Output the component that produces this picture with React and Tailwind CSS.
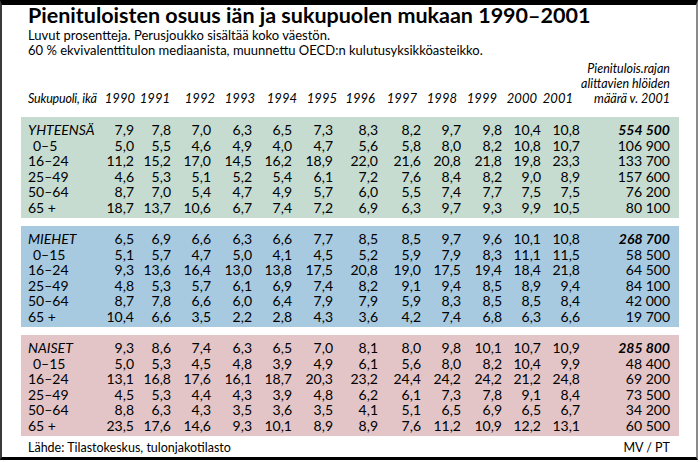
const YEARS = ["1990", "1991", "1992", "1993", "1994", "1995", "1996", "1997", "1998", "1999", "2000", "2001"];

const GROUPS = [
	{
		bg: "bg-[#c6dcd0]",
		rows: [
			["YHTEENSÄ", "7,9 7,8 7,0 6,3 6,5 7,3 8,3 8,2 9,7 9,8 10,4 10,8", "554 500"],
			["0–5", "5,0 5,5 4,6 4,9 4,0 4,7 5,6 5,8 8,0 8,2 10,8 10,7", "106 900"],
			["16–24", "11,2 15,2 17,0 14,5 16,2 18,9 22,0 21,6 20,8 21,8 19,8 23,3", "133 700"],
			["25–49", "4,6 5,3 5,1 5,2 5,4 6,1 7,2 7,6 8,4 8,2 9,0 8,9", "157 600"],
			["50–64", "8,7 7,0 5,4 4,7 4,9 5,7 6,0 5,5 7,4 7,7 7,5 7,5", "76 200"],
			["65 +", "18,7 13,7 10,6 6,7 7,4 7,2 6,9 6,3 9,7 9,3 9,9 10,5", "80 100"],
		],
	},
	{
		bg: "bg-[#a8cae0]",
		rows: [
			["MIEHET", "6,5 6,9 6,6 6,3 6,6 7,7 8,5 8,5 9,7 9,6 10,1 10,8", "268 700"],
			["0–15", "5,1 5,7 4,7 5,0 4,1 4,5 5,2 5,9 7,9 8,3 11,1 11,5", "58 500"],
			["16–24", "9,3 13,6 16,4 13,0 13,8 17,5 20,8 19,0 17,5 19,4 18,4 21,8", "64 500"],
			["25–49", "4,8 5,3 5,7 6,1 6,9 7,4 8,2 9,1 9,4 8,5 8,9 9,4", "84 100"],
			["50–64", "8,7 7,8 6,6 6,0 6,4 7,9 7,9 5,9 8,3 8,5 8,5 8,4", "42 000"],
			["65 +", "10,4 6,6 3,5 2,2 2,8 4,3 3,6 4,2 7,4 6,8 6,3 6,6", "19 700"],
		],
	},
	{
		bg: "bg-[#e3c5c7]",
		rows: [
			["NAISET", "9,3 8,6 7,4 6,3 6,5 7,0 8,1 8,0 9,8 10,1 10,7 10,9", "285 800"],
			["0–15", "5,0 5,3 4,5 4,8 3,9 4,9 6,1 5,6 8,0 8,2 10,4 9,9", "48 400"],
			["16–24", "13,1 16,8 17,6 16,1 18,7 20,3 23,2 24,4 24,2 24,2 21,2 24,8", "69 200"],
			["25–49", "4,5 5,3 4,4 4,3 3,9 4,8 6,2 6,1 7,3 7,8 9,1 8,4", "73 500"],
			["50–64", "8,8 6,3 4,3 3,5 3,6 3,5 4,1 5,1 6,5 6,9 6,5 6,7", "34 200"],
			["65 +", "23,5 17,6 14,6 9,3 10,1 8,9 8,9 7,6 11,2 10,9 12,2 13,1", "60 500"],
		],
	},
];

const ROW_GRID =
	"grid grid-cols-[72px_34px_37px_40px_41px_40px_41px_45px_43px_40px_41px_39px_39px_90px]";

const DataRow = ({ label, values, total, first }) => (
	<div className={`${ROW_GRID} h-[15.5px] leading-[15.5px] text-[14px]`}>
		<div className={`${first ? "italic" : ""} ${label.startsWith("0") ? "pl-[5px]" : ""}`}>{label}</div>
		{values.split(" ").map((v, i) => (
			<div key={i} className="text-right">
				{v}
			</div>
		))}
		<div className={`text-right ${first ? "font-bold italic" : ""}`}>{total}</div>
	</div>
);

const Panel = ({ bg, rows }) => (
	<div className={`${bg} pl-[7px] pr-[9px] pt-[5px] pb-[3px]`}>
		{rows.map(([label, values, total], i) => (
			<DataRow key={label + i} label={label} values={values} total={total} first={i === 0} />
		))}
	</div>
);

export default function App() {
	return (
		<div className="w-[700px] h-[462px] bg-white text-black font-['Lato',sans-serif]">
			<div className="w-[698px] h-[460px] border-t-[5px] border-t-black border-l-2 border-l-[#3a3a3a] border-r-2 border-r-[#8a8a8a] border-b-[3px] border-b-black flex flex-col pl-[19px] pr-[17px]">
				<div className="px-[7px]">
					<h1 className="text-[21.5px] leading-[20px] font-bold whitespace-nowrap">Pienituloisten osuus iän ja sukupuolen mukaan 1990–2001</h1>
					<div className="mt-[3px] text-[13px] leading-[15px]">
						<p>Luvut prosentteja. Perusjoukko sisältää koko väestön.</p>
						<p>60 % ekvivalenttitulon mediaanista, muunnettu OECD:n kulutusyksikköasteikko.</p>
					</div>
					<div className="mt-[2.5px] grid grid-cols-[72px_35px_35px_45px_40px_42px_40px_38px_42px_40px_40px_40px_36px_97px] items-end italic text-[13px] leading-[15px]">
						<div className="whitespace-nowrap text-[12.5px] tracking-[-0.2px]">Sukupuoli, ikä</div>
						{YEARS.map((y) => (
							<div key={y} className="text-right">
								{y}
							</div>
						))}
						<div className="text-right text-[12.5px] whitespace-nowrap">
							<div>Pienitulois.rajan</div>
							<div>alittavien hlöiden</div>
							<div>määrä v. 2001</div>
						</div>
					</div>
				</div>
				<div className="mt-[11.5px] flex flex-col gap-[8px]">
					{GROUPS.map((g, i) => (
						<Panel key={i} bg={g.bg} rows={g.rows} />
					))}
				</div>
				<div className="mt-[5px] px-[7px] pr-[9px] flex justify-between text-[12.5px] leading-[14px]">
					<span>Lähde: Tilastokeskus, tulonjakotilasto</span>
					<span>MV / PT</span>
				</div>
			</div>
		</div>
	);
}
